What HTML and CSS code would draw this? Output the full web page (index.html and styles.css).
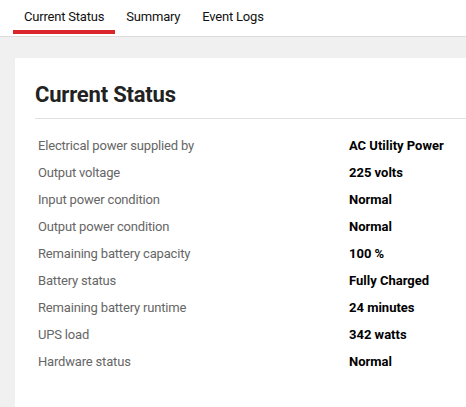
FILE: index.html
```html
<!DOCTYPE html>
<html>
<head>
<meta charset="utf-8">
<link rel="stylesheet" href="styles.css">
</head>
<body>
<nav class="tabbar">
  <div class="tab active">Current Status</div>
  <div class="tab">Summary</div>
  <div class="tab">Event Logs</div>
</nav>
<main class="content">
  <section class="card">
    <h2 class="title">Current Status</h2>
    <div class="rows">
      <div class="row"><span class="label">Electrical power supplied by</span><span class="value">AC Utility Power</span></div>
      <div class="row"><span class="label">Output voltage</span><span class="value">225 volts</span></div>
      <div class="row"><span class="label">Input power condition</span><span class="value">Normal</span></div>
      <div class="row"><span class="label">Output power condition</span><span class="value">Normal</span></div>
      <div class="row"><span class="label">Remaining battery capacity</span><span class="value">100 %</span></div>
      <div class="row"><span class="label">Battery status</span><span class="value">Fully Charged</span></div>
      <div class="row"><span class="label">Remaining battery runtime</span><span class="value">24 minutes</span></div>
      <div class="row"><span class="label">UPS load</span><span class="value">342 watts</span></div>
      <div class="row"><span class="label">Hardware status</span><span class="value">Normal</span></div>
    </div>
  </section>
</main>
</body>
</html>
```
FILE: styles.css
```css
html, body {
  margin: 0;
  padding: 0;
  height: 100%;
  font-family: Roboto, "Liberation Sans", Arial, sans-serif;
  background: #f0f0f0;
  overflow: hidden;
}
body {
  display: flex;
  flex-direction: column;
}
.tabbar {
  display: flex;
  align-items: flex-start;
  flex: none;
  height: 36px;
  padding-left: 13px;
  background: #fff;
  border-bottom: 1px solid #dcdcdc;
}
.tab {
  padding: 9px 11px 6px;
  font-size: 13px;
  line-height: 15px;
  letter-spacing: -0.2px;
  color: #111;
  border-bottom: 4px solid transparent;
}
.tab.active {
  border-bottom-color: #d9262c;
}
.content {
  flex: 1;
  display: flex;
  flex-direction: column;
  padding: 21px 0 0 15px;
}
.card {
  flex: 1;
  background: #fff;
  padding: 24px 0 0 20px;
}
.title {
  margin: 0;
  font-size: 22px;
  line-height: 26px;
  font-weight: 700;
  letter-spacing: -0.2px;
  color: #222;
  padding-bottom: 10px;
  border-bottom: 1px solid #e2e2e2;
}
.rows {
  padding: 13px 0 0 3px;
}
.row {
  display: flex;
  height: 27px;
  line-height: 27px;
  font-size: 13px;
}
.label {
  width: 311px;
  color: #666;
  letter-spacing: -0.18px;
}
.value {
  font-weight: 700;
  color: #000;
}
```
